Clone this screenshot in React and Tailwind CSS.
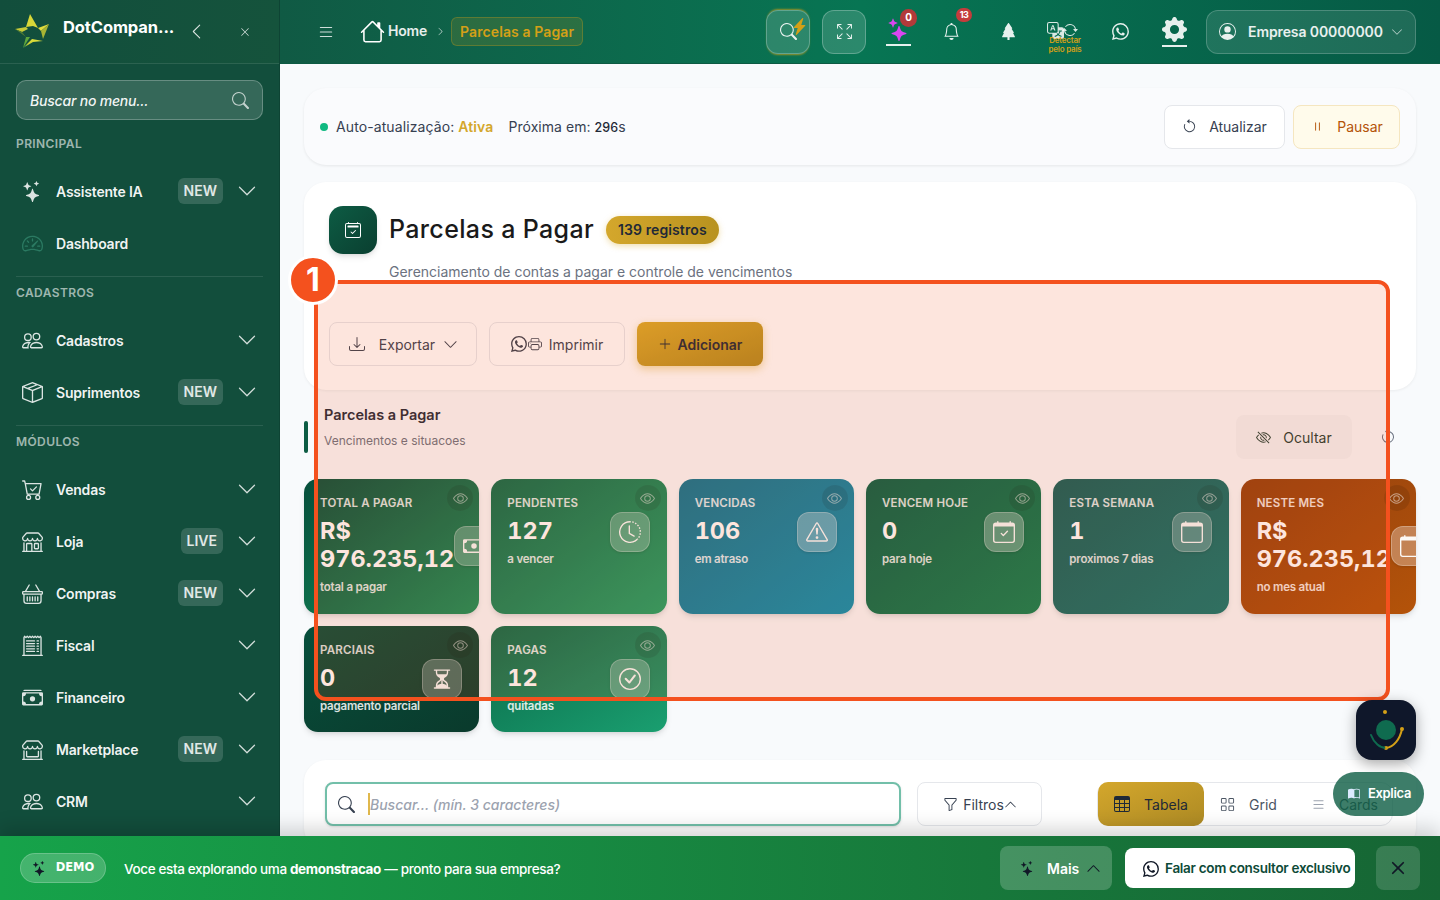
import React from 'react';
import {
    BsStars, BsSpeedometer2, BsPeople, BsBoxSeam, BsCartCheck, BsShop, BsBasket, BsReceiptCutoff, BsCashStack,
    BsShopWindow, BsChevronDown, BsChevronUp, BsChevronLeft, BsChevronRight, BsSearch, BsXLg, BsX, BsList, BsHouse,
    BsLightningChargeFill, BsArrowsFullscreen, BsBell, BsTreeFill, BsTranslate, BsArrowRepeat, BsWhatsapp, BsGearFill,
    BsPersonCircle, BsArrowCounterclockwise, BsPause, BsCalendar2Check, BsDownload, BsPrinter, BsPlusLg, BsEyeSlash,
    BsEye, BsCash, BsClockHistory, BsExclamationTriangle, BsCalendarCheck, BsCalendar, BsHourglassSplit, BsCheckCircle,
    BsFunnel, BsTable, BsGrid, BsBookHalf,
} from 'react-icons/bs';

const menuGroups = [
    {
        label: 'PRINCIPAL',
        items: [
            { name: 'Assistente IA', icon: BsStars, badge: 'NEW', arrow: true },
            { name: 'Dashboard', icon: BsSpeedometer2, dim: true },
        ],
    },
    {
        label: 'CADASTROS',
        items: [
            { name: 'Cadastros', icon: BsPeople, arrow: true },
            { name: 'Suprimentos', icon: BsBoxSeam, badge: 'NEW', arrow: true },
        ],
    },
    {
        label: 'MÓDULOS',
        items: [
            { name: 'Vendas', icon: BsCartCheck, arrow: true },
            { name: 'Loja', icon: BsShop, badge: 'LIVE', arrow: true },
            { name: 'Compras', icon: BsBasket, badge: 'NEW', arrow: true },
            { name: 'Fiscal', icon: BsReceiptCutoff, arrow: true },
            { name: 'Financeiro', icon: BsCashStack, arrow: true },
            { name: 'Marketplace', icon: BsShopWindow, badge: 'NEW', arrow: true },
            { name: 'CRM', icon: BsPeople, arrow: true },
        ],
    },
];

const statsTop = [
    { title: 'TOTAL A PAGAR', value: 'R$ 976.235,12', sub: 'total a pagar', icon: BsCash, bg: 'bg-gradient-to-br from-[#064e3b] to-[#15905a]', box: 'bg-white/25' },
    { title: 'PENDENTES', value: '127', sub: 'a vencer', icon: BsClockHistory, bg: 'bg-gradient-to-br from-[#0b6b4a] to-[#1da268]', box: 'bg-white/25' },
    { title: 'VENCIDAS', value: '106', sub: 'em atraso', icon: BsExclamationTriangle, bg: 'bg-gradient-to-br from-[#0e7490] to-[#0891b2]', box: 'bg-white/30' },
    { title: 'VENCEM HOJE', value: '0', sub: 'para hoje', icon: BsCalendarCheck, bg: 'bg-gradient-to-br from-[#065f46] to-[#0b8050]', box: 'bg-white/30' },
    { title: 'ESTA SEMANA', value: '1', sub: 'proximos 7 dias', icon: BsCalendar, bg: 'bg-gradient-to-br from-[#115e59] to-[#0f766e]', box: 'bg-white/25' },
    { title: 'NESTE MES', value: 'R$ 976.235,12', sub: 'no mes atual', icon: BsCalendar, bg: 'bg-gradient-to-br from-[#92400e] to-[#b45309]', box: 'bg-white/30' },
];

const statsBottom = [
    { title: 'PARCIAIS', value: '0', sub: 'pagamento parcial', icon: BsHourglassSplit, bg: 'bg-gradient-to-br from-[#064e3b] to-[#0a3a2c]', box: 'bg-white/25' },
    { title: 'PAGAS', value: '12', sub: 'quitadas', icon: BsCheckCircle, bg: 'bg-gradient-to-br from-[#0b6b4a] to-[#1a9f70]', box: 'bg-white/25' },
];

const StarLogo = () => (
    <svg width="38" height="38" viewBox="6 7 38 38">
        <defs>
            <linearGradient id="star" x1="0.5" y1="0" x2="0.3" y2="1">
                <stop offset="0" stopColor="#e4e23c" />
                <stop offset="0.6" stopColor="#c4cc34" />
                <stop offset="1" stopColor="#2f9a50" />
            </linearGradient>
        </defs>
        {/* top */}
        <path d="M22 8L30 22L25 20L18 21Z" fill="#d8d838" />
        {/* left */}
        <path d="M7 23L18 21L20 23L14 26Z" fill="#c8cc38" />
        <path d="M7 23L14 26L18 31Z" fill="#4e7a34" />
        {/* right */}
        <path d="M41 18L30 22L33 25Z" fill="#e0dc3c" />
        <path d="M41 18L33 25L35 33Z" fill="#a8b434" />
        {/* bottom */}
        <path d="M15 42L18 31L22 31Z" fill="#5ea63c" />
        <path d="M15 42L24 33L35 35L25 36Z" fill="url(#star)" />
    </svg>
);

const AssistantMark = () => (
    <svg width="60" height="60" viewBox="0 0 60 60" className="block">
        <circle cx="30" cy="30" r="10" fill="#0f6b4f" />
        <circle cx="29" cy="12" r="2" fill="#d4a017" />
        <circle cx="46" cy="29" r="2" fill="#d4a017" />
        <circle cx="30" cy="48" r="2" fill="#d4a017" />
        <path d="M15 35c3 8 9 13 15 13" fill="none" stroke="#0f6b4f" strokeWidth="2" strokeLinecap="round" />
        <path d="M30 48c8-1 14-9 16-19" fill="none" stroke="#d4a017" strokeWidth="2" strokeLinecap="round" />
    </svg>
);

const MenuRow = ({ item }) => {
    const Icon = item.icon;
    return (
        <div className="flex h-[52px] items-center pl-[22px] pr-[22px]">
            <Icon className={`h-[21px] w-[21px] shrink-0 ${item.dim ? 'text-[#2b7a62]' : 'text-white/85'}`} />
            <span className="ml-[13px] text-[14px] font-semibold tracking-[-0.2px] text-white/95">{item.name}</span>
            {item.badge && (
                <span className="ml-auto rounded-md bg-white/15 px-[6px] py-[4px] text-[14px] font-semibold leading-[18px] text-white/85">{item.badge}</span>
            )}
            {item.arrow && <BsChevronDown className={`h-[20px] w-[20px] text-white/80 ${item.badge ? 'ml-[14px]' : 'ml-auto'}`} />}
        </div>
    );
};

const Sidebar = () => (
    <aside className="flex h-full w-[280px] shrink-0 flex-col overflow-hidden border-r border-[#0e4434] bg-[#124e3c]">
        {/* Branding */}
        <div className="flex h-16 shrink-0 items-center border-b border-white/10 bg-gradient-to-r from-[#124e3c] to-[#15533c] pl-[14px]">
            <StarLogo />
            <span className="-mt-2 ml-[11px] w-[113px] whitespace-nowrap text-[16.5px] font-bold tracking-[-0.1px] text-white">DotCompan...</span>
            <BsChevronLeft className="ml-[12px] h-[17px] w-[17px] text-white/85" />
            <BsXLg className="ml-[35px] h-[10px] w-[10px] text-white/85" />
        </div>

        <div className="px-4 pt-4">
            <div className="flex h-10 items-center justify-between rounded-[10px] border border-white/25 bg-white/15 pl-[13px] pr-[13px]">
                <span className="text-[14px] font-medium italic tracking-[-0.2px] text-white/95">Buscar no menu...</span>
                <BsSearch className="h-[17px] w-[17px] text-white/70" />
            </div>
        </div>

        {/* Navigation */}
        {menuGroups.map((group, i) => (
            <div key={group.label} className={i === 0 ? 'pt-[17px]' : 'mt-[7px]'}>
                {i > 0 && <div className="mx-4 border-t border-white/10 pt-[9px]" />}
                <div className="px-4 text-[12px] font-semibold leading-[14px] tracking-[0.4px] text-white/60">{group.label}</div>
                <div className="pt-[14px]">
                    {group.items.map((item) => <MenuRow key={item.name} item={item} />)}
                </div>
            </div>
        ))}
    </aside>
);

const Topbar = () => (
    <header className="flex h-16 shrink-0 items-center border-b border-[#0d5a43] bg-gradient-to-r from-[#105a44] via-[#077553] to-[#065a45] text-white">
        <BsList className="ml-[37px] h-[18px] w-[18px] text-white/80" />
        <BsHouse className="ml-[25px] h-[25px] w-[25px]" />
        <span className="-mt-[3px] ml-[3px] text-[14px] font-semibold tracking-[-0.2px] text-white/90">Home</span>
        <BsChevronRight className="ml-[9px] h-[9px] w-[9px] text-white/80" />
        <span className="ml-[6px] rounded-md border border-[#d4a017]/30 bg-[#d4a017]/15 px-[8px] py-[4px] text-[14px] font-semibold leading-[19px] tracking-[0.1px] text-[#d4a017]">Parcelas a Pagar</span>

        <div className="ml-auto mr-6 flex items-center">
            <div className="relative flex h-11 w-11 items-center justify-center rounded-xl border border-white/25 bg-white/15 shadow-[0_-2px_2px_-1px_rgba(212,160,23,0.7),0_2px_2px_-1px_rgba(212,160,23,0.7)]">
                <BsSearch className="h-[17px] w-[17px] text-white/90" />
                <BsLightningChargeFill className="absolute right-[1px] top-[7px] h-[17px] w-[17px] text-[#d4a017]" />
            </div>
            <div className="ml-3 flex h-11 w-11 items-center justify-center rounded-xl border border-white/25 bg-white/15">
                <BsArrowsFullscreen className="h-[15px] w-[15px] text-white/90" />
            </div>
            <div className="relative ml-[20px] flex h-11 w-[25px] flex-col items-center justify-center">
                <BsStars className="h-[24px] w-[24px] text-[#d946ef]" />
                <div className="mt-[3px] h-[2px] w-[25px] bg-white/90" />
                <span className="absolute left-[14px] top-[-1px] flex h-[18px] w-[17px] items-center justify-center rounded-full bg-[#b23a3a] text-[10px] font-bold text-white">0</span>
            </div>
            <div className="relative ml-[32px] flex h-11 items-center">
                <BsBell className="h-[17px] w-[17px] text-white/90" />
                <span className="absolute left-[13px] top-[-2px] flex h-[14px] w-[16px] items-center justify-center rounded-full bg-[#c43c3c] text-[9px] font-bold tracking-[-0.5px] text-white">13</span>
            </div>
            <BsTreeFill className="ml-[40px] h-[17px] w-[17px] text-white/90" />
            <div className="relative ml-[30px] flex h-11 w-[36px] items-start pt-[12px]">
                <BsTranslate className="h-[17px] w-[17px] text-white/85" />
                <BsArrowRepeat className="-ml-[2px] h-[16px] w-[16px] text-white/85" />
                <span className="absolute left-[-2px] top-[26px] w-[40px] text-center text-[8px] font-semibold leading-[9px] tracking-[-0.2px] text-[#d4a017]">Detectar pelo país</span>
            </div>
            <BsWhatsapp className="ml-[29px] h-[17px] w-[17px] text-white/90" />
            <div className="ml-[33px] flex h-11 w-[25px] flex-col items-center justify-center">
                <BsGearFill className="h-[25px] w-[25px] text-white/90" />
                <div className="mt-[3px] h-[2px] w-[25px] bg-white/90" />
            </div>
            <div className="ml-[19px] flex h-11 w-[210px] items-center rounded-xl border border-white/20 bg-white/10 pl-[12px]">
                <BsPersonCircle className="h-[17px] w-[17px] text-white/90" />
                <span className="ml-[12px] text-[14px] font-semibold tracking-[-0.1px] text-white/90">Empresa 00000000</span>
                <BsChevronDown className="ml-[8px] h-[12px] w-[12px] text-white/70" />
            </div>
        </div>
    </header>
);

const StatCard = ({ card }) => {
    const Icon = card.icon;
    return (
        <div className={`relative overflow-hidden rounded-[14px] pb-[17px] pl-4 pr-[17px] pt-4 text-white shadow-md ${card.bg}`}>
            <span className="absolute right-[6px] top-[6px] flex h-[26px] w-[26px] items-center justify-center rounded-full bg-black/10">
                <BsEye className="h-[15px] w-[15px] text-white/50" />
            </span>
            <div className="flex items-center justify-between">
                <div>
                    <div className="whitespace-nowrap text-[11.5px] font-semibold leading-[16px] tracking-[0.2px] text-white/85">{card.title}</div>
                    <div className="mt-[6px] text-[23.5px] font-bold leading-[28px] tabular-nums">{card.value}</div>
                    <div className="mt-[6px] whitespace-nowrap text-[11.5px] font-semibold leading-[17px] tracking-[-0.2px] text-white/85">{card.sub}</div>
                </div>
                <span className={`flex h-10 w-10 shrink-0 items-center justify-center rounded-xl border border-white/25 shadow-sm ${card.box}`}>
                    <Icon className="h-[22px] w-[22px] text-white/95" />
                </span>
            </div>
        </div>
    );
};

const App = () => (
    <div className="relative flex h-screen w-full overflow-hidden bg-[#f8fafc] font-['Inter',sans-serif]">
        <Sidebar />
        <div className="flex min-w-0 flex-1 flex-col">
            <Topbar />
            <main className="relative flex-1 overflow-hidden px-6 pt-6">
                {/* Auto refresh */}
                <section className="flex h-[77px] items-center justify-between rounded-[22px] bg-[#fafbfd] pl-4 pr-4 shadow-[0_1px_3px_rgba(0,0,0,0.08)]">
                    <div className="flex items-center text-[14px] text-[#374151]">
                        <span className="h-2 w-2 rounded-full bg-[#10b981]" />
                        <span className="ml-2 tracking-[0.1px]">Auto-atualização: <b className="font-semibold text-[#d4a72c]">Ativa</b></span>
                        <span className="ml-[15px] tracking-[0.05px]">Próxima em: <span className="text-[12.5px] font-medium text-[#1f2937]">296</span>s</span>
                    </div>
                    <div className="flex items-center gap-2">
                        <button className="flex h-11 w-[121px] items-center justify-center gap-[12px] rounded-lg border border-[#e5e7eb] bg-white text-[14px] text-[#374151]">
                            <BsArrowCounterclockwise className="h-[15px] w-[15px]" />
                            Atualizar
                        </button>
                        <button className="flex h-11 w-[107px] items-center justify-center gap-[12px] rounded-lg border border-[#f5e6c0] bg-[#fffbeb] text-[14px] text-[#b45309]">
                            <BsPause className="h-[15px] w-[15px]" />
                            Pausar
                        </button>
                    </div>
                </section>

                {/* Page header */}
                <section className="mt-[17px] h-[208px] rounded-[22px] bg-white px-[25px] pt-6 shadow-[0_1px_3px_rgba(0,0,0,0.06)]">
                    <div className="flex items-center">
                        <span className="flex h-12 w-12 items-center justify-center rounded-[14px] bg-gradient-to-br from-[#0d5c44] to-[#0a3f30] shadow-md">
                            <BsCalendar2Check className="h-[16px] w-[16px] text-white" />
                        </span>
                        <h1 className="ml-3 text-[25px] font-medium tracking-[0.35px] text-[#1a1a1a]">Parcelas a Pagar</h1>
                        <span className="ml-3 rounded-full bg-gradient-to-r from-[#d4a72c] to-[#b8921f] px-[12px] py-[5px] text-[14px] font-semibold leading-[18px] tracking-[0.1px] text-[#1f2937] shadow-[0_2px_6px_rgba(212,160,23,0.35)]">139 registros</span>
                    </div>
                    <p className="ml-[60px] mt-[9px] text-[14px] leading-[18px] text-[#6b7280]">Gerenciamento de contas a pagar e controle de vencimentos</p>
                    <div className="mt-[41px] flex items-center gap-3">
                        <button className="flex h-11 w-[148px] items-center justify-center rounded-lg border border-[#e5e7eb] bg-white text-[14px] text-[#374151]">
                            <BsDownload className="ml-[1px] h-[16px] w-[16px]" />
                            <span className="ml-[14px]">Exportar</span>
                            <BsChevronDown className="ml-2 h-[15px] w-[15px]" />
                        </button>
                        <button className="flex h-11 w-[136px] items-center justify-center rounded-lg border border-[#e5e7eb] bg-white text-[14px] text-[#374151]">
                            <BsWhatsapp className="h-[16px] w-[16px]" />
                            <BsPrinter className="ml-[1px] h-[14px] w-[14px]" />
                            <span className="ml-[7px]">Imprimir</span>
                        </button>
                        <button className="flex h-11 w-[126px] items-center justify-center rounded-lg bg-gradient-to-br from-[#d9ab2a] to-[#b08a20] text-[14px] font-semibold text-[#1f2937] shadow-[0_3px_8px_rgba(212,160,23,0.4)]">
                            <BsPlusLg className="h-[14px] w-[14px]" />
                            <span className="ml-[6px]">Adicionar</span>
                        </button>
                    </div>
                </section>

                {/* Stats */}
                <section className="relative pt-[15px]">
                    <span className="absolute left-0 top-[31px] h-8 w-[4px] rounded-full bg-[#0d5c44]" />
                    <div className="flex items-start justify-between pl-5">
                        <div>
                            <h2 className="pt-[1px] text-[14.5px] font-semibold leading-[18px] text-[#1f2937]">Parcelas a Pagar</h2>
                            <p className="mt-[8px] text-[12px] leading-[18px] text-[#6b7280]">Vencimentos e situacoes</p>
                        </div>
                        <div className="mt-[10px] flex items-center">
                            <button className="flex h-11 w-[116px] items-center justify-center gap-[12px] rounded-lg bg-[#f3f4f6] text-[14px] text-[#1f3d33]">
                                <BsEyeSlash className="h-[15px] w-[15px]" />
                                Ocultar
                            </button>
                            <span className="ml-[28px] mr-[20px] flex"><BsArrowCounterclockwise className="h-[16px] w-[16px] text-[#6b7280]" /></span>
                        </div>
                    </div>
                    <div className="mt-[20px] grid grid-cols-6 grid-rows-[135px_106px] gap-3">
                        {statsTop.map((card) => <StatCard key={card.title} card={card} />)}
                        {statsBottom.map((card) => <StatCard key={card.title} card={card} />)}
                    </div>
                </section>

                {/* Filters */}
                <section className="mt-[28px] flex h-[90px] items-start rounded-[22px] bg-white pl-[21px] pr-[16px] pt-[22px] shadow-[0_1px_3px_rgba(0,0,0,0.06)]">
                    <div className="flex h-11 w-[576px] shrink-0 items-center rounded-lg border-2 border-[#72bfa9] bg-white pl-[11px] shadow-sm">
                        <BsSearch className="h-[17px] w-[17px] text-[#374151]" />
                        <span className="ml-[13px] h-[22px] w-[2px] bg-[#e0b84c]" />
                        <span className="text-[14px] font-medium italic text-[#9ca3af]">Buscar... (mín. 3 caracteres)</span>
                    </div>
                    <button className="ml-4 flex h-11 w-[125px] shrink-0 items-center justify-center rounded-lg border border-[#e5e7eb] bg-white pl-[1px] text-[14px] text-[#374151]">
                        <BsFunnel className="mr-[5px] h-[15px] w-[15px]" />
                        Filtros
                        <BsChevronUp className="h-[13px] w-[13px]" />
                    </button>
                    <div className="ml-[55px] flex h-11 w-[296px] shrink-0 items-center rounded-xl border border-[#e5e7eb] bg-white text-[14px] text-[#4b5563]">
                        <span className="flex h-11 w-[106px] shrink-0 items-center justify-center gap-[14px] rounded-[10px] bg-gradient-to-br from-[#d4a72c] to-[#ad8a24] text-[#1f2937]">
                            <BsTable className="h-[16px] w-[16px]" />
                            Tabela
                        </span>
                        <span className="ml-4 flex items-center gap-[14px]"><BsGrid className="h-[15px] w-[15px]" />Grid</span>
                        <span className="ml-[34px] flex items-center gap-[13px]"><BsList className="h-[15px] w-[15px] text-[#9ca3af]" />Cards</span>
                    </div>
                </section>

                {/* Tour highlight */}
                <div className="absolute left-[34px] top-[216px] z-10 h-[421px] w-[1076px] rounded-xl border-[4px] border-[#f4511e] bg-[#f4511e]/15" />
                <span className="absolute left-[8px] top-[191px] z-20 flex h-[50px] w-[50px] items-center justify-center rounded-full border-[3px] border-white bg-[#f4511e] text-[32px] font-bold text-white">1</span>
            </main>
        </div>

        {/* Floating helpers */}
        <div className="absolute left-[1356px] top-[700px] z-30 h-[60px] w-[60px] rounded-2xl bg-[#0f172a] shadow-[0_4px_14px_rgba(0,0,0,0.35)]">
            <AssistantMark />
        </div>
        <div className="absolute left-[1333px] top-[772px] z-30 flex h-11 w-[91px] items-center justify-center gap-[8px] rounded-full bg-[#0d5c44]/80 pl-[2px] text-[13px] font-semibold tracking-[-0.3px] text-white">
            <BsBookHalf className="h-[12px] w-[12px] text-[#dbeafe]" />
            Explica
        </div>

        {/* Demo banner */}
        <div className="absolute bottom-0 left-0 z-40 flex h-16 w-full items-center bg-gradient-to-r from-[#16a34a] to-[#166534] pl-5 pr-5 shadow-[0_-8px_18px_rgba(0,0,0,0.16)]">
            <span className="flex h-[30px] w-[86px] items-center justify-center gap-[9px] rounded-full border border-white/20 bg-white/20 font-['DejaVu_Sans',sans-serif] text-[11.5px] font-bold text-white">
                <BsStars className="h-[15px] w-[15px] text-[#111827]" />
                DEMO
            </span>
            <span className="ml-[18px] pt-[2px] text-[13.5px] font-medium tracking-[-0.36px] text-white">
                Voce esta explorando uma <b className="font-bold">demonstracao</b> — pronto para sua empresa?
            </span>
            <div className="ml-auto flex items-center">
                <button className="flex h-11 w-[112px] items-center rounded-lg bg-white/20 pl-[20px] text-[14px] font-semibold text-white">
                    <BsStars className="h-[15px] w-[15px] text-[#111827]" />
                    <span className="ml-[12px]">Mais</span>
                    <BsChevronUp className="ml-[7px] h-[15px] w-[15px] text-[#111827]" />
                </button>
                <button className="ml-[13px] flex h-10 w-[230px] items-center gap-[6px] rounded-lg bg-white pl-[18px] pt-[1px] text-[13.5px] font-semibold tracking-[-0.3px] text-[#0d4a38]">
                    <BsWhatsapp className="h-[16px] w-[16px] text-[#111827]" />
                    Falar com consultor exclusivo
                </button>
                <button className="ml-[21px] flex h-11 w-11 items-center justify-center rounded-lg bg-white/15 text-[#111827]">
                    <BsX className="h-[28px] w-[28px]" />
                </button>
            </div>
        </div>
    </div>
);

export default App;
